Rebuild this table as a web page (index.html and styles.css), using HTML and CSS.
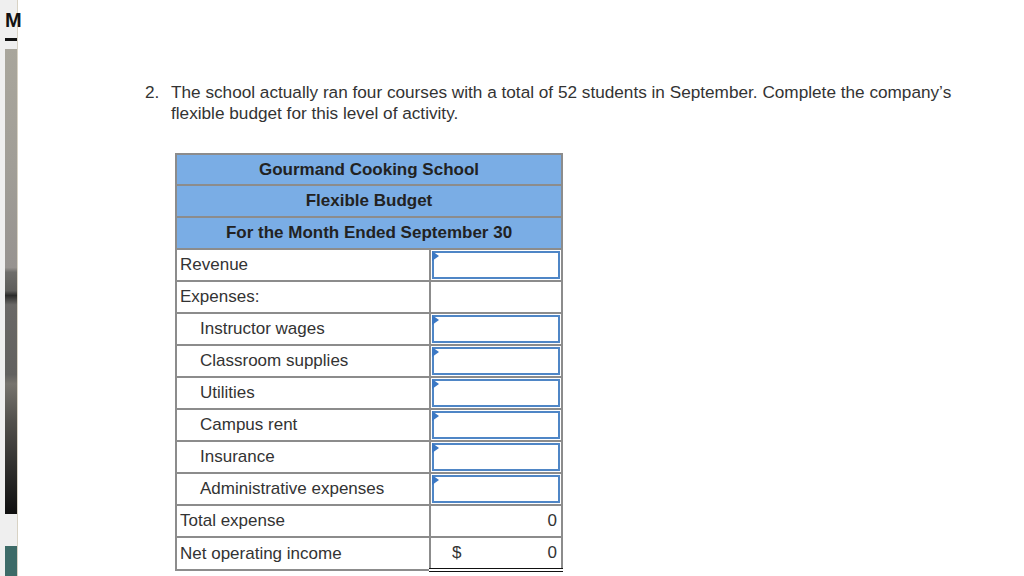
FILE: index.html
```html
<!DOCTYPE html>
<html>
<head>
<meta charset="utf-8">
<link rel="stylesheet" href="styles.css">
</head>
<body>
<div class="page">
  <aside class="side">
    <div class="side-letter">M</div>
    <div class="side-bar"></div>
    <div class="side-photo"></div>
    <div class="side-teal"></div>
  </aside>
  <main class="main">
    <div class="question">
      <span class="qnum">2.</span>
      <span class="qtext">The school actually ran four courses with a total of 52 students in September. Complete the company’s flexible budget for this level of activity.</span>
    </div>
    <table class="budget">
      <colgroup><col class="c1"><col class="c2"></colgroup>
      <tr class="head first"><th colspan="2">Gourmand Cooking School</th></tr>
      <tr class="head"><th colspan="2">Flexible Budget</th></tr>
      <tr class="head"><th colspan="2">For the Month Ended September 30</th></tr>
      <tr><td class="lbl">Revenue</td><td class="val"><div class="inp"></div></td></tr>
      <tr><td class="lbl">Expenses:</td><td class="val"></td></tr>
      <tr><td class="lbl ind">Instructor wages</td><td class="val"><div class="inp"></div></td></tr>
      <tr><td class="lbl ind">Classroom supplies</td><td class="val"><div class="inp"></div></td></tr>
      <tr><td class="lbl ind">Utilities</td><td class="val"><div class="inp"></div></td></tr>
      <tr><td class="lbl ind">Campus rent</td><td class="val"><div class="inp"></div></td></tr>
      <tr><td class="lbl ind">Insurance</td><td class="val"><div class="inp"></div></td></tr>
      <tr><td class="lbl ind">Administrative expenses</td><td class="val"><div class="inp"></div></td></tr>
      <tr><td class="lbl">Total expense</td><td class="val total"><span class="num">0</span></td></tr>
      <tr><td class="lbl">Net operating income</td><td class="val net"><span class="cur">$</span><span class="num">0</span></td></tr>
    </table>
  </main>
</div>
</body>
</html>
```
FILE: styles.css
```css
html, body { margin: 0; padding: 0; background: #fff; }
body { font-family: "Liberation Sans", Arial, sans-serif; color: #333; }
.page { display: flex; width: 1024px; height: 576px; overflow: hidden; }
.side {
  width: 17px; flex: none; background: #efefef;
  border-right: 1px solid #d8d2c4;
  display: flex; flex-direction: column; align-items: flex-end;
}
.side-letter {
  width: 12px; margin-top: 8px; height: 24px;
  font-weight: bold; font-size: 20px; line-height: 24px; color: #111; letter-spacing: -2px;
}
.side-bar { width: 12px; height: 3px; background: #111; margin-top: 6px; }
.side-photo {
  width: 12px; height: 467px; margin-top: 8px;
  background: linear-gradient(to bottom, #a9a69c 0%, #a19e97 25%, #979390 47%, #6e6d6a 48%, #5e5d5a 52%, #2b2b2a 53%, #6a6866 55%, #62615f 70%, #77746e 72%, #52504c 80%, #302f2d 90%, #0f0f0f 100%);
}
.side-teal { width: 12px; height: 30px; margin-top: 32px; background: #3d6b68; }
.main { flex: 1; padding: 82px 0 0 127px; }
.question { display: flex; font-size: 17.2px; line-height: 21px; color: #333; width: 840px; }
.qnum { width: 26px; flex: none; }
.qtext { flex: 1; }
.budget {
  margin: 29px 0 0 30px; border-collapse: collapse; table-layout: fixed; width: 386px;
  border: 2px solid #8c8c8c; font-size: 17px;
}
.c1 { width: 254px; }
.c2 { width: 132px; }
.budget td, .budget th { border: 2px solid #8c8c8c; height: 30px; padding: 0; }
.head th {
  background: #7aade5; color: #222; font-weight: bold; text-align: center;
}
.head.first th { height: 29px; }
.lbl { padding-left: 3px !important; background: #fff; white-space: nowrap; }
.lbl.ind { padding-left: 23px !important; }
.val { padding: 0 1px !important; }
.inp {
  position: relative; height: 24px; border: 2px solid #4f86c6; background: #fff;
}
.inp::before {
  content: ""; position: absolute; left: -2px; top: -2px;
  border-left: 7px solid #3b78c4; border-top: 5px solid transparent; border-bottom: 5px solid transparent;
}
.total { border-top: 2px solid #111 !important; }
.net { border-top: 2px solid #111 !important; border-bottom: 4px double #111 !important; }
.num { float: right; padding-right: 3px; }
.cur { padding-left: 20px; }
```
